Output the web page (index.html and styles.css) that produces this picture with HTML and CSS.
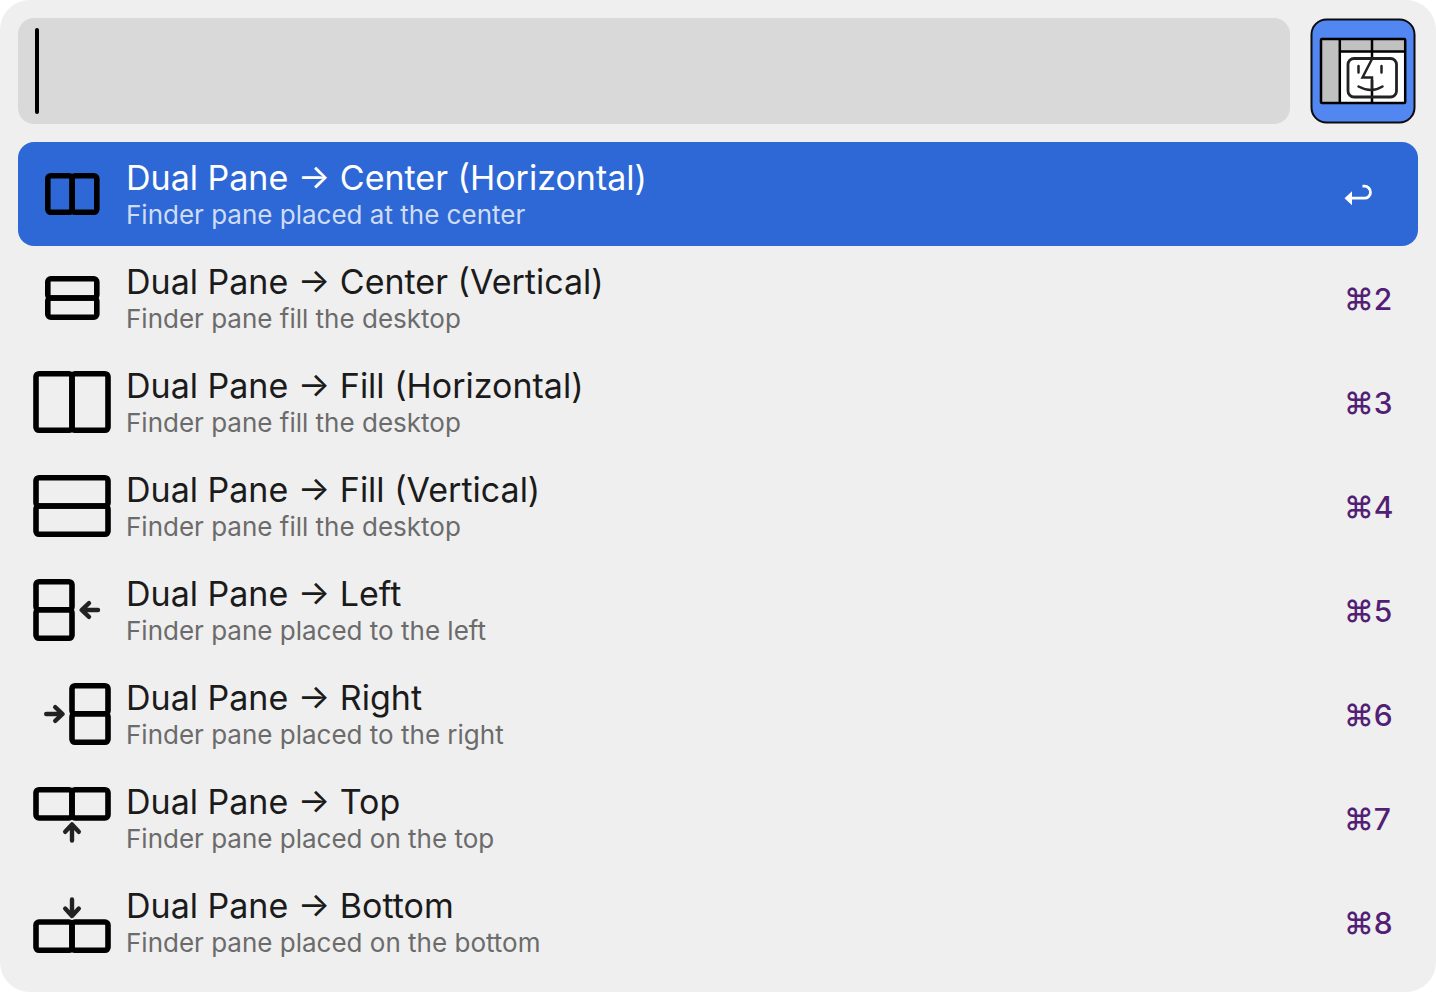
FILE: index.html
```html
<!DOCTYPE html>
<html lang="en">
<head>
<meta charset="utf-8">
<meta name="viewport" content="width=device-width, initial-scale=1">
<title>Dual Pane</title>
<link rel="stylesheet" href="styles.css">
</head>
<body>
<main class="launcher">
  <header class="search">
    <div class="field">
      <span class="caret"></span>
      <input class="query" type="text" aria-label="Search">
    </div>
    <svg class="logo" viewBox="0 0 106 106" aria-hidden="true">
      <rect x="1.500" y="1.500" width="103" height="103" rx="15" fill="#5286f0" stroke="#0b0b10" stroke-width="2"/>
      <rect x="11" y="21" width="84" height="64" fill="#fff"/>
      <path d="M11 21h19v64H11zM30 21h65v12H30z" fill="#c1c1c1"/>
      <rect x="11" y="21" width="84.200" height="64" rx="1" fill="none" stroke="#000" stroke-width="2.500"/>
      <path d="M29.800 21v64M30 33.500h65M62 21v20M62 62v23" fill="none" stroke="#000" stroke-width="2.500"/>
      <rect x="38" y="40.500" width="48.500" height="38.500" rx="6" fill="none" stroke="#222" stroke-width="2.800"/>
      <path d="M62 41L52.500 59.500h9.500v12.500M48.500 48v6.500M71.500 48v6.500M48.500 68.500q13 7 24 0" fill="none" stroke="#222" stroke-width="2.500" stroke-linecap="round"/>
    </svg>
  </header>
  <ul class="results">
    <li><button class="row selected" type="button">
      <svg class="icon" viewBox="0 0 84 64" aria-hidden="true"><rect x="17.800" y="13.700" width="24.400" height="36.600" rx="3"/><rect x="42.200" y="13.700" width="24.600" height="36.600" rx="3"/></svg>
      <span class="text"><span class="title">Dual Pane → Center (Horizontal)</span><span class="subtitle">Finder pane placed at the center</span></span>
      <kbd class="key"><svg class="return" viewBox="0 0 28 24" role="img" aria-label="Return"><path d="M18.500 3.200h2a5.800 5.800 0 0 1 0 12H6" fill="none" stroke="currentColor" stroke-width="2.800"/><path d="M0.500 15.200L8 8.200v14z" fill="currentColor"/></svg></kbd>
    </button></li>
    <li><button class="row" type="button">
      <svg class="icon" viewBox="0 0 84 64" aria-hidden="true"><rect x="17.800" y="12.800" width="49" height="19.200" rx="3"/><rect x="17.800" y="32" width="49" height="19.200" rx="3"/></svg>
      <span class="text"><span class="title">Dual Pane → Center (Vertical)</span><span class="subtitle">Finder pane fill the desktop</span></span>
      <kbd class="key">⌘2</kbd>
    </button></li>
    <li><button class="row" type="button">
      <svg class="icon" viewBox="0 0 84 64" aria-hidden="true"><rect x="6" y="3.700" width="36" height="56.600" rx="3"/><rect x="42" y="3.700" width="36" height="56.600" rx="3"/></svg>
      <span class="text"><span class="title">Dual Pane → Fill (Horizontal)</span><span class="subtitle">Finder pane fill the desktop</span></span>
      <kbd class="key">⌘3</kbd>
    </button></li>
    <li><button class="row" type="button">
      <svg class="icon" viewBox="0 0 84 64" aria-hidden="true"><rect x="6" y="3.700" width="72" height="28.300" rx="3"/><rect x="6" y="32" width="72" height="28.300" rx="3"/></svg>
      <span class="text"><span class="title">Dual Pane → Fill (Vertical)</span><span class="subtitle">Finder pane fill the desktop</span></span>
      <kbd class="key">⌘4</kbd>
    </button></li>
    <li><button class="row" type="button">
      <svg class="icon" viewBox="0 0 84 64" aria-hidden="true"><rect x="6" y="3.700" width="36" height="28" rx="3"/><rect x="6" y="31.700" width="36" height="28.600" rx="3"/><path d="M68 32H52M59 25.200L51.600 32l7.400 6.800"/></svg>
      <span class="text"><span class="title">Dual Pane → Left</span><span class="subtitle">Finder pane placed to the left</span></span>
      <kbd class="key">⌘5</kbd>
    </button></li>
    <li><button class="row" type="button">
      <svg class="icon" viewBox="0 0 84 64" aria-hidden="true"><rect x="42" y="3.700" width="36" height="28" rx="3"/><rect x="42" y="31.700" width="36" height="28.600" rx="3"/><path d="M16.200 32h16M25.200 25.200l7.400 6.800-7.400 6.800"/></svg>
      <span class="text"><span class="title">Dual Pane → Right</span><span class="subtitle">Finder pane placed to the right</span></span>
      <kbd class="key">⌘6</kbd>
    </button></li>
    <li><button class="row" type="button">
      <svg class="icon" viewBox="0 0 84 64" aria-hidden="true"><rect x="6" y="3.700" width="36" height="28.300" rx="3"/><rect x="42" y="3.700" width="36" height="28.300" rx="3"/><path d="M42 54.500V39M35.200 45.800L42 38.400l6.800 7.400"/></svg>
      <span class="text"><span class="title">Dual Pane → Top</span><span class="subtitle">Finder pane placed on the top</span></span>
      <kbd class="key">⌘7</kbd>
    </button></li>
    <li><button class="row" type="button">
      <svg class="icon" viewBox="0 0 84 64" aria-hidden="true"><rect x="6" y="32" width="36" height="28.300" rx="3"/><rect x="42" y="32" width="36" height="28.300" rx="3"/><path d="M42 9.500V25M35.200 18.600L42 26l6.800-7.400"/></svg>
      <span class="text"><span class="title">Dual Pane → Bottom</span><span class="subtitle">Finder pane placed on the bottom</span></span>
      <kbd class="key">⌘8</kbd>
    </button></li>
  </ul>
</main>
</body>
</html>
```

FILE: styles.css
```css
* {
  box-sizing: border-box;
}

body {
  margin: 0;
  background: #fff;
  font-family: Inter, "Liberation Sans", sans-serif;
}

.launcher {
  display: flex;
  flex-direction: column;
  gap: 18px;
  min-height: 100vh;
  padding: 18px;
  border-radius: 30px;
  background: #efefef;
}

.search {
  display: flex;
  gap: 20px;
}

.field {
  display: flex;
  flex: 1;
  align-items: center;
  padding: 10px 17px;
  border-radius: 16px;
  background: #d9d9d9;
}

.caret {
  width: 4px;
  height: 86px;
  border-radius: 2px;
  background: #000;
}

.query {
  flex: 1;
  min-width: 0;
  height: 86px;
  padding: 0;
  border: 0;
  outline: 0;
  background: transparent;
  color: #1b1b1b;
  font: inherit;
  font-size: 56px;
}

.logo {
  width: 106px;
  height: 106px;
  margin-right: 2px;
}

.results {
  margin: 0;
  padding: 0;
  list-style: none;
}

.row {
  display: flex;
  align-items: center;
  gap: 12px;
  width: 100%;
  height: 104px;
  padding: 0 28px 0 12px;
  border: 0;
  border-radius: 16px;
  background: transparent;
  color: #1b1b1b;
  font: inherit;
  text-align: left;
}

.icon {
  flex: none;
  width: 84px;
  height: 64px;
  fill: none;
  stroke-linecap: round;
  stroke-linejoin: round;
}

.icon rect {
  stroke: #000;
  stroke-width: 5.6px;
}

.icon path {
  stroke: #222;
  stroke-width: 4.4px;
}

.text {
  display: flex;
  flex: 1;
  flex-direction: column;
  min-width: 0;
}

.title {
  font-size: 34px;
  line-height: 42px;
}

.subtitle {
  color: #6b6b6b;
  font-size: 26px;
  line-height: 32px;
}

.key {
  display: flex;
  width: 46px;
  padding-top: 2px;
  color: #531f75;
  font: inherit;
  font-size: 30px;
  font-weight: 500;
  line-height: 40px;
}

.selected {
  background: #2d68d6;
  color: #fff;
}

.selected .subtitle {
  color: #d0dcf5;
}

.selected .key {
  color: #fff;
}

.return {
  width: 28px;
  height: 24px;
}
```
